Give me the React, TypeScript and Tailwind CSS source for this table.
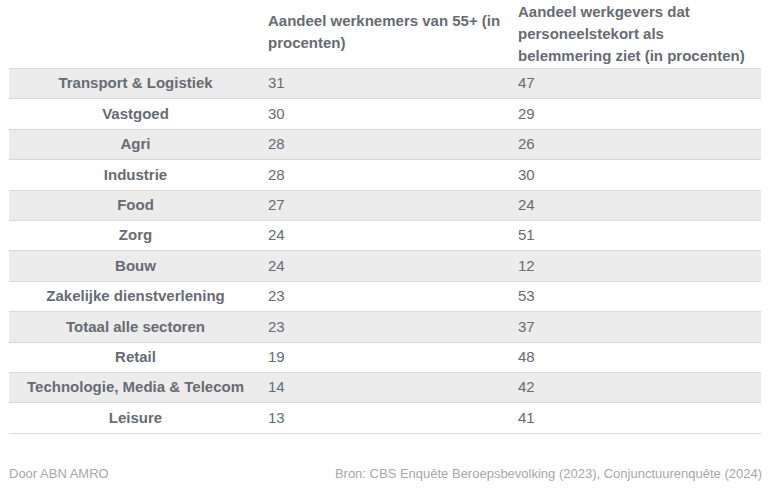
import React from "react";

const rows: [string, string, string][] = [
  ["Transport & Logistiek", "31", "47"],
  ["Vastgoed", "30", "29"],
  ["Agri", "28", "26"],
  ["Industrie", "28", "30"],
  ["Food", "27", "24"],
  ["Zorg", "24", "51"],
  ["Bouw", "24", "12"],
  ["Zakelijke dienstverlening", "23", "53"],
  ["Totaal alle sectoren", "23", "37"],
  ["Retail", "19", "48"],
  ["Technologie, Media & Telecom", "14", "42"],
  ["Leisure", "13", "41"],
];

export default function App() {
  return (
    <div
      className="w-[775px] h-[488px] bg-white px-[9px] text-[#676b72]"
      style={{ fontFamily: '"Liberation Sans", Arial, sans-serif' }}
    >
      <div className="w-[752px]">
        <div className="grid grid-cols-[249px_250px_253px] h-[69px] border-b border-[#d9d9d9] text-[15px] font-bold leading-[22px]">
          <div />
          <div className="flex items-center pl-[10px] pr-[2px] pb-[5px]">
            Aandeel werknemers van 55+ (in procenten)
          </div>
          <div className="flex items-center pl-[10px] pr-[2px] pb-[1px]">
            Aandeel werkgevers dat personeelstekort als belemmering ziet (in procenten)
          </div>
        </div>
        {rows.map(([name, a, b], i) => (
          <div
            key={name}
            className={`grid grid-cols-[249px_250px_253px] h-[30.4px] border-b border-[#d9d9d9] text-[15px] ${
              i % 2 === 0 ? "bg-[#ececec]" : "bg-white"
            }`}
          >
            <div className="flex items-center justify-center font-bold pl-[6px] pr-[2px] whitespace-nowrap">
              {name}
            </div>
            <div className="flex items-center px-[10px]">{a}</div>
            <div className="flex items-center px-[10px]">{b}</div>
          </div>
        ))}
      </div>
      <div className="w-[753px] flex justify-between mt-[32px] text-[13px] text-[#a8a8a8] leading-[16px]">
        <span>Door ABN AMRO</span>
        <span>Bron: CBS Enquête Beroepsbevolking (2023), Conjunctuurenquête (2024)</span>
      </div>
    </div>
  );
}
